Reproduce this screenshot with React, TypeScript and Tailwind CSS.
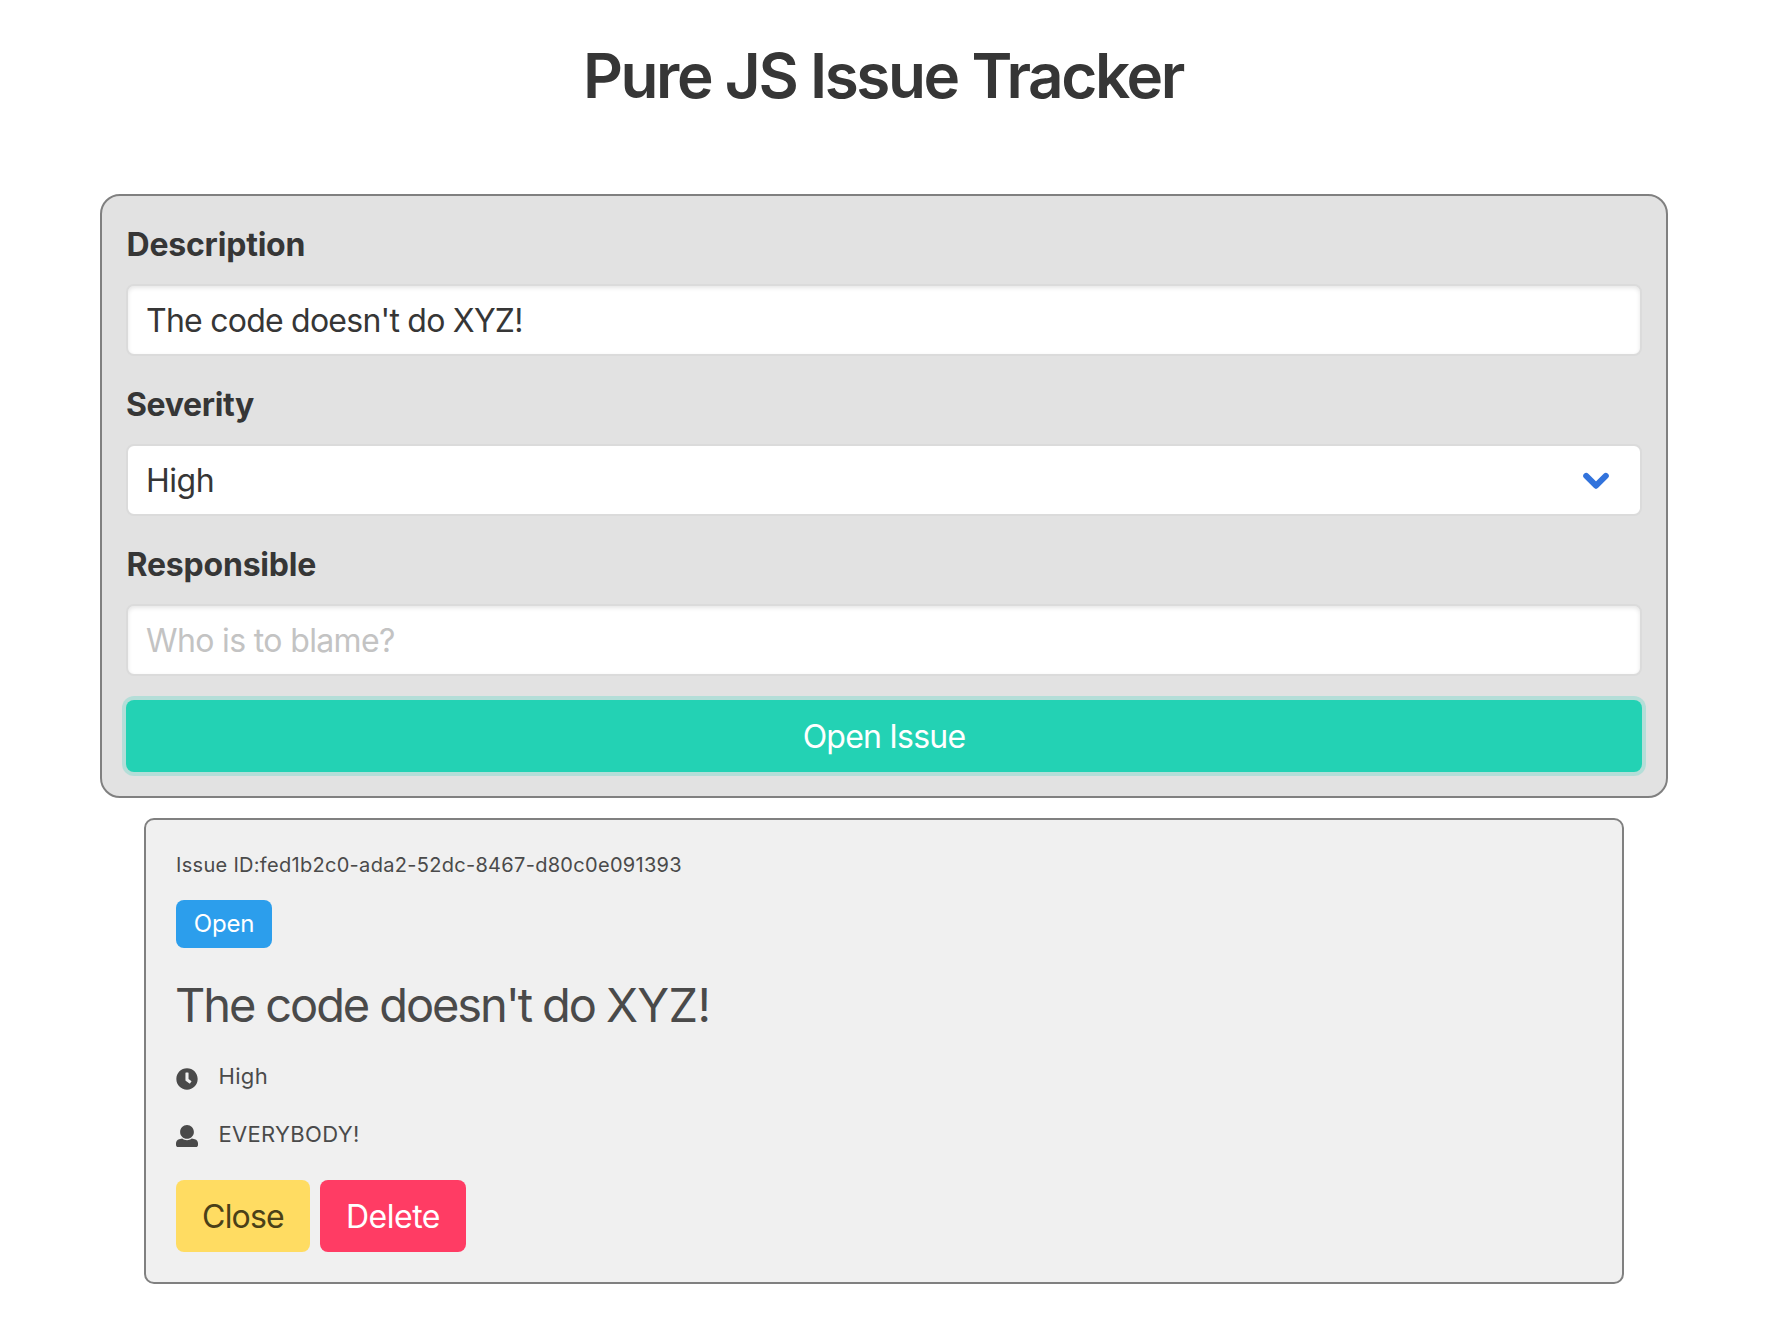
import type { ReactNode } from "react";

const LABEL = "block h-12 pt-px text-[32px] leading-12 font-bold text-[#363636]";
const CONTROL =
  "mt-4 flex h-[72px] w-full items-center justify-between rounded-lg border-2 border-[#dbdbdb] bg-white pl-[18px] pr-[31px] text-[32px] text-[#363636]";
const INSET = "shadow-[inset_0_2px_4px_rgba(10,10,10,0.1)]";

function Detail({ icon, iconClass, children }: { icon: string; iconClass: string; children: ReactNode }) {
  return (
    <div className="mt-5 flex h-[38px] items-start">
      <svg viewBox="0 0 512 512" className={`${iconClass} size-[22px] fill-[#4a4a4a]`}>
        <path d={icon} />
      </svg>
      <span className="ml-[20.5px] text-[22px] leading-[33px] tracking-[0.33px]">{children}</span>
    </div>
  );
}

const CLOCK =
  "M256 8C119 8 8 119 8 256s111 248 248 248 248-111 248-248S393 8 256 8zm57.1 350.1L224.9 294c-3.1-2.3-4.9-5.9-4.9-9.7V116c0-6.6 5.4-12 12-12h48c6.6 0 12 5.4 12 12v137.7l63.5 46.2c5.4 3.9 6.5 11.4 2.6 16.8l-28.2 38.8c-3.9 5.3-11.4 6.5-16.8 2.6z";
const USER =
  "M256 0c88.366 0 160 71.634 160 160s-71.634 160-160 160S96 248.366 96 160 167.634 0 256 0zm183.283 333.821l-71.313-17.828c-74.923 53.89-165.738 41.864-223.94 0l-71.313 17.828C29.981 344.505 0 382.903 0 426.955V464c0 26.51 21.49 48 48 48h416c26.51 0 48-21.49 48-48v-37.045c0-44.052-29.981-82.45-72.717-93.134z";

export default function App() {
  return (
    <main className="min-h-[1336px] bg-white px-[100px] pt-10 font-['Inter',sans-serif]">
      <div className="flex h-[154px] w-[1566px] items-start justify-center">
        <h1 className="whitespace-nowrap text-[62px] leading-[72px] font-semibold text-[#363636]">
          <span className="tracking-[-2.4px] [word-spacing:0.4px]">Pure JS Issue Tracker</span>
        </h1>
      </div>

      <form className="h-[604px] w-[1568px] rounded-[20px] border-2 border-[#808080] bg-[#e2e2e2] p-6">
        <label className={LABEL}>
          <span className="ml-[0.5px] tracking-[-0.2px]">Description</span>
        </label>
        <div className={`${CONTROL} ${INSET}`}>
          <span className="pt-[2px] tracking-[-0.76px]">The code doesn't do XYZ!</span>
        </div>
        <label className={`${LABEL} mt-6`}>
          <span className="tracking-[-0.35px]">Severity</span>
        </label>
        <div className={CONTROL}>
          <span className="pt-[2px] tracking-[-0.5px]">High</span>
          <svg viewBox="0 0 26 17" className="h-[17px] w-[26px] fill-none stroke-[#3273dc] stroke-[6]">
            <path d="M3.2 3.9 13 13.7 22.8 3.9" strokeLinecap="round" strokeLinejoin="round" />
          </svg>
        </div>
        <label className={`${LABEL} mt-6`}>
          <span className="ml-[0.5px] tracking-[-0.2px]">Responsible</span>
        </label>
        <div className={`${CONTROL} ${INSET}`}>
          <span className="pt-[2px] tracking-[-0.64px] text-[#c3c3c3]">Who is to blame?</span>
        </div>
        <button
          type="button"
          className="mt-6 flex h-[72px] w-full items-center justify-center rounded-lg bg-[#23d2b4] text-[32px] text-white shadow-[0_0_0_4px_rgba(0,209,178,0.2)]"
        >
          <span className="pt-[2px] tracking-[-0.8px]">Open Issue</span>
        </button>
      </form>

      <section className="mt-5 ml-11 h-[466px] w-[1480px] rounded-[10px] border-2 border-[#808080] bg-[#f0f0f0] p-[30px] text-[#4a4a4a]">
        <h6 className="text-[20px] leading-[30px]">
          <span className="tracking-[0.3px]">Issue ID:fed1b2c0-ada2-52dc-8467-d80c0e091393</span>
        </h6>
        <p className="mt-5 flex h-12 w-24 items-center justify-center rounded-lg bg-[#2c9eec] text-[24px] text-white">
          <span className="tracking-[-0.15px]">Open</span>
        </p>
        <h3 className="mt-5 -ml-px h-[72px] pt-px text-[47px] leading-[72px]">
          <span className="tracking-[-2.1px]">The code doesn't do </span>
          <span className="tracking-[-0.7px]">XYZ!</span>
        </h3>
        <Detail icon={CLOCK} iconClass="mt-2">High</Detail>
        <Detail icon={USER} iconClass="mt-[7px]">EVERYBODY!</Detail>
        <div className="mt-6 flex gap-[10px]">
          <button
            type="button"
            className="flex h-[72px] w-[134px] items-center justify-center rounded-lg bg-[#ffdc62] text-[32px] text-[#4a4018]"
          >
            <span className="pt-[2px] tracking-[-0.8px]">Close</span>
          </button>
          <button
            type="button"
            className="flex h-[72px] w-[146px] items-center justify-center rounded-lg bg-[#ff3c64] text-[32px] text-white"
          >
            <span className="pt-[2px] tracking-[-0.5px]">Delete</span>
          </button>
        </div>
      </section>
    </main>
  );
}
